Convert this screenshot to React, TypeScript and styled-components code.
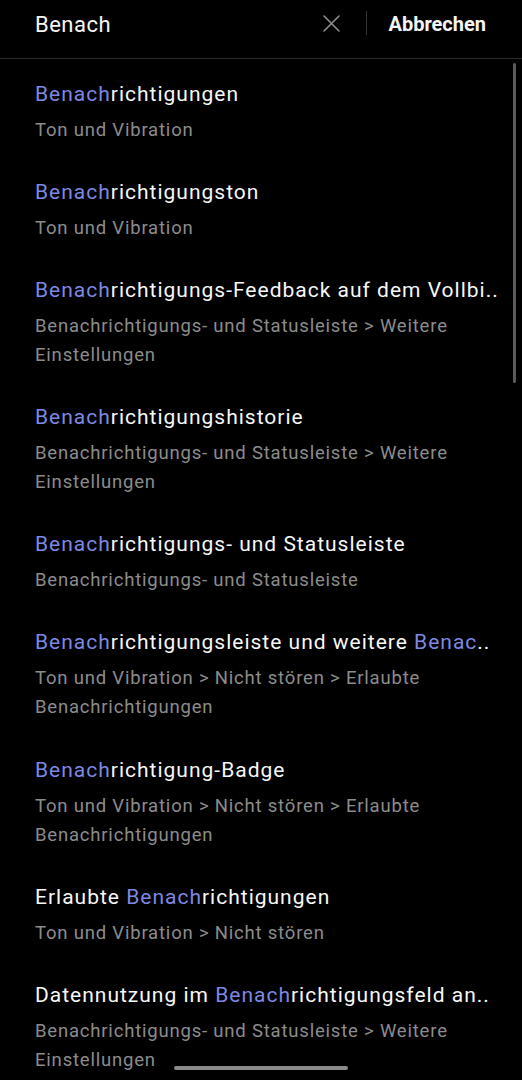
import React from "react";
import styled, { createGlobalStyle } from "styled-components";

const GlobalStyle = createGlobalStyle`
  html, body {
    margin: 0;
    padding: 0;
    background: #000;
  }
  body {
    font-family: Roboto, "Noto Sans", "Liberation Sans", sans-serif;
    -webkit-font-smoothing: antialiased;
  }
`;

const Screen = styled.div`
  position: relative;
  width: 522px;
  height: 1080px;
  background: #000;
  overflow: hidden;
`;

const SearchBar = styled.div`
  display: flex;
  align-items: center;
  height: 59px;
  padding: 0 36px 0 35px;
  border-bottom: 1px solid #2b2b2b;
  box-sizing: border-box;
`;

const QueryText = styled.div`
  flex: 1;
  color: #f5f5f5;
  font-size: 22px;
  letter-spacing: 0.5px;
  margin-top: -10px;
`;

const ClearButton = styled.div`
  display: flex;
  align-items: center;
  justify-content: center;
  width: 18px;
  height: 18px;
  margin-top: -12px;
  margin-right: 26px;
`;

const Separator = styled.div`
  width: 1px;
  height: 24px;
  background: #333;
  margin-top: -12px;
  margin-right: 21px;
`;

const CancelButton = styled.div`
  color: #f5f5f5;
  font-size: 20px;
  font-weight: 700;
  margin-top: -11px;
`;

const ResultList = styled.div`
  display: flex;
  flex-direction: column;
  padding-top: 3px;
`;

const ResultItem = styled.div`
  padding: 17px 22px 15.1px 35px;
`;

const Title = styled.div`
  color: #f7f7f7;
  font-size: 21px;
  letter-spacing: 1px;
  line-height: 30px;
  white-space: nowrap;
  overflow: hidden;
`;

const Mark = styled.span`
  color: #7e88e4;
`;

const Path = styled.div`
  color: #8c8c8c;
  font-size: 18.5px;
  letter-spacing: 0.8px;
  line-height: 29px;
  margin-top: 7px;
`;

const ScrollThumb = styled.div`
  position: absolute;
  top: 63px;
  right: 6px;
  width: 3px;
  height: 320px;
  border-radius: 2px;
  background: #5a5a5a;
`;

const HomeIndicator = styled.div`
  position: absolute;
  bottom: 10px;
  left: 174px;
  width: 174px;
  height: 4px;
  border-radius: 2px;
  background: #8a8a8a;
`;

type Segment = { text: string; hit?: boolean };

const results: { title: Segment[]; path: string }[] = [
  {
    title: [{ text: "Benach", hit: true }, { text: "richtigungen" }],
    path: "Ton und Vibration",
  },
  {
    title: [{ text: "Benach", hit: true }, { text: "richtigungston" }],
    path: "Ton und Vibration",
  },
  {
    title: [
      { text: "Benach", hit: true },
      { text: "richtigungs-Feedback auf dem Vollbi.." },
    ],
    path: "Benachrichtigungs- und Statusleiste > Weitere Einstellungen",
  },
  {
    title: [{ text: "Benach", hit: true }, { text: "richtigungshistorie" }],
    path: "Benachrichtigungs- und Statusleiste > Weitere Einstellungen",
  },
  {
    title: [
      { text: "Benach", hit: true },
      { text: "richtigungs- und Statusleiste" },
    ],
    path: "Benachrichtigungs- und Statusleiste",
  },
  {
    title: [
      { text: "Benach", hit: true },
      { text: "richtigungsleiste und weitere " },
      { text: "Benac", hit: true },
      { text: ".." },
    ],
    path: "Ton und Vibration > Nicht stören > Erlaubte Benachrichtigungen",
  },
  {
    title: [{ text: "Benach", hit: true }, { text: "richtigung-Badge" }],
    path: "Ton und Vibration > Nicht stören > Erlaubte Benachrichtigungen",
  },
  {
    title: [
      { text: "Erlaubte " },
      { text: "Benach", hit: true },
      { text: "richtigungen" },
    ],
    path: "Ton und Vibration > Nicht stören",
  },
  {
    title: [
      { text: "Datennutzung im " },
      { text: "Benach", hit: true },
      { text: "richtigungsfeld an.." },
    ],
    path: "Benachrichtigungs- und Statusleiste > Weitere Einstellungen",
  },
];

export default function App() {
  return (
    <Screen>
      <GlobalStyle />
      <SearchBar>
        <QueryText>Benach</QueryText>
        <ClearButton>
          <svg width="17" height="17" viewBox="0 0 17 17" fill="none" stroke="#8d8d8d" strokeWidth="1.6" strokeLinecap="round">
            <path d="M1 1L16 16M16 1L1 16" />
          </svg>
        </ClearButton>
        <Separator />
        <CancelButton>Abbrechen</CancelButton>
      </SearchBar>

      <ResultList>
        {results.map((r, i) => (
          <ResultItem key={i}>
            <Title>
              {r.title.map((s, j) =>
                s.hit ? <Mark key={j}>{s.text}</Mark> : <span key={j}>{s.text}</span>
              )}
            </Title>
            <Path>{r.path}</Path>
          </ResultItem>
        ))}
      </ResultList>

      <ScrollThumb />
      <HomeIndicator />
    </Screen>
  );
}
